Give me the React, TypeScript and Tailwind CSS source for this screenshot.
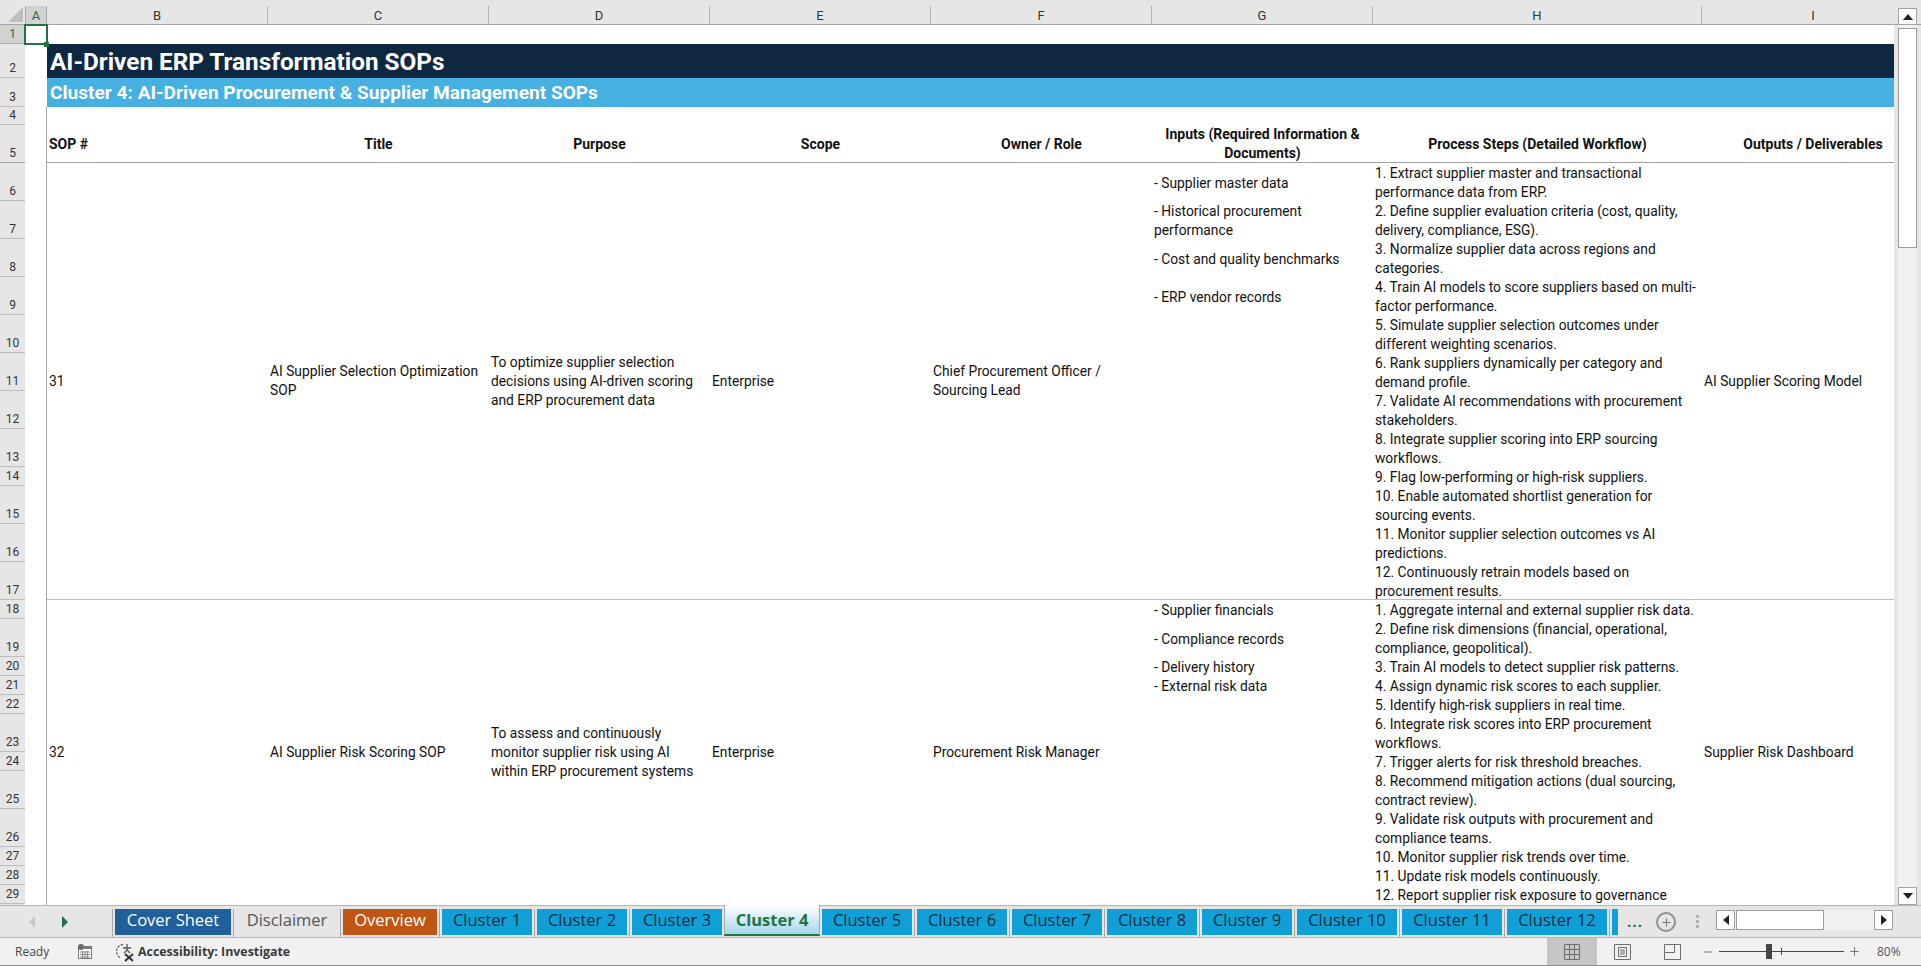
import React from 'react';
import { Plus, Minus } from 'lucide-react';

const COLUMNS = [
  { label: 'B', w: 'w-[221px]' },
  { label: 'C', w: 'w-[221px]' },
  { label: 'D', w: 'w-[221px]' },
  { label: 'E', w: 'w-[221px]' },
  { label: 'F', w: 'w-[221px]' },
  { label: 'G', w: 'w-[221px]' },
  { label: 'H', w: 'w-[329px]' },
];

// row number, height
const ROWS: [number, string][] = [
  [1, 'h-[19px]'], [2, 'h-[34px]'], [3, 'h-[29px]'], [4, 'h-[18px]'], [5, 'h-[38px]'],
  [6, 'h-[38px]'], [7, 'h-[38px]'], [8, 'h-[38px]'], [9, 'h-[38px]'], [10, 'h-[38px]'],
  [11, 'h-[38px]'], [12, 'h-[38px]'], [13, 'h-[38px]'], [14, 'h-[19px]'], [15, 'h-[38px]'],
  [16, 'h-[38px]'], [17, 'h-[38px]'], [18, 'h-[19px]'], [19, 'h-[38px]'], [20, 'h-[19px]'],
  [21, 'h-[19px]'], [22, 'h-[19px]'], [23, 'h-[38px]'], [24, 'h-[19px]'], [25, 'h-[38px]'],
  [26, 'h-[38px]'], [27, 'h-[19px]'], [28, 'h-[19px]'], [29, 'h-[19px]'],
];

const SOPS = [
  {
    no: '31',
    height: 'h-[437px]',
    title: ['AI Supplier Selection Optimization', 'SOP'],
    purpose: ['To optimize supplier selection', 'decisions using AI-driven scoring', 'and ERP procurement data'],
    scope: 'Enterprise',
    owner: ['Chief Procurement Officer /', 'Sourcing Lead'],
    inputs: [
      { h: 'h-[38px]', lines: ['- Supplier master data'] },
      { h: 'h-[38px]', lines: ['- Historical procurement', 'performance'] },
      { h: 'h-[38px]', lines: ['- Cost and quality benchmarks'] },
      { h: 'h-[38px]', lines: ['- ERP vendor records'] },
    ],
    steps: [
      '1. Extract supplier master and transactional',
      'performance data from ERP.',
      '2. Define supplier evaluation criteria (cost, quality,',
      'delivery, compliance, ESG).',
      '3. Normalize supplier data across regions and',
      'categories.',
      '4. Train AI models to score suppliers based on multi-',
      'factor performance.',
      '5. Simulate supplier selection outcomes under',
      'different weighting scenarios.',
      '6. Rank suppliers dynamically per category and',
      'demand profile.',
      '7. Validate AI recommendations with procurement',
      'stakeholders.',
      '8. Integrate supplier scoring into ERP sourcing',
      'workflows.',
      '9. Flag low-performing or high-risk suppliers.',
      '10. Enable automated shortlist generation for',
      'sourcing events.',
      '11. Monitor supplier selection outcomes vs AI',
      'predictions.',
      '12. Continuously retrain models based on',
      'procurement results.',
    ],
    output: 'AI Supplier Scoring Model',
  },
  {
    no: '32',
    height: 'h-[305px]',
    title: ['AI Supplier Risk Scoring SOP'],
    purpose: ['To assess and continuously', 'monitor supplier risk using AI', 'within ERP procurement systems'],
    scope: 'Enterprise',
    owner: ['Procurement Risk Manager'],
    inputs: [
      { h: 'h-[19px]', lines: ['- Supplier financials'] },
      { h: 'h-[38px]', lines: ['- Compliance records'] },
      { h: 'h-[19px]', lines: ['- Delivery history'] },
      { h: 'h-[19px]', lines: ['- External risk data'] },
    ],
    steps: [
      '1. Aggregate internal and external supplier risk data.',
      '2. Define risk dimensions (financial, operational,',
      'compliance, geopolitical).',
      '3. Train AI models to detect supplier risk patterns.',
      '4. Assign dynamic risk scores to each supplier.',
      '5. Identify high-risk suppliers in real time.',
      '6. Integrate risk scores into ERP procurement',
      'workflows.',
      '7. Trigger alerts for risk threshold breaches.',
      '8. Recommend mitigation actions (dual sourcing,',
      'contract review).',
      '9. Validate risk outputs with procurement and',
      'compliance teams.',
      '10. Monitor supplier risk trends over time.',
      '11. Update risk models continuously.',
      '12. Report supplier risk exposure to governance',
    ],
    output: 'Supplier Risk Dashboard',
  },
];

const TABS = [
  { name: 'Cover Sheet', w: 'w-[116px]', cls: 'bg-[#215f9a] text-white' },
  { name: 'Disclaimer', w: 'w-[102px]', cls: 'text-[#555555]' },
  { name: 'Overview', w: 'w-[94px]', cls: 'bg-[#c05515] text-white' },
  { name: 'Cluster 1', w: 'w-[90px]', cls: 'bg-[#119fd7] text-[#10303f]' },
  { name: 'Cluster 2', w: 'w-[90px]', cls: 'bg-[#119fd7] text-[#10303f]' },
  { name: 'Cluster 3', w: 'w-[90px]', cls: 'bg-[#119fd7] text-[#10303f]' },
];

const TABS_AFTER = [
  { name: 'Cluster 5', w: 'w-[90px]' },
  { name: 'Cluster 6', w: 'w-[90px]' },
  { name: 'Cluster 7', w: 'w-[90px]' },
  { name: 'Cluster 8', w: 'w-[90px]' },
  { name: 'Cluster 9', w: 'w-[90px]' },
  { name: 'Cluster 10', w: 'w-[100px]' },
  { name: 'Cluster 11', w: 'w-[100px]' },
  { name: 'Cluster 12', w: 'w-[100px]' },
];

function TabSep() {
  return <div className="mx-[2px] h-[28px] w-px shrink-0 bg-[#a8a8a8]" />;
}

function Lines({ lines }: { lines: string[] }) {
  return (
    <div>
      {lines.map((l) => (
        <div key={l} className="whitespace-nowrap">{l}</div>
      ))}
    </div>
  );
}

function SopRow({ sop, last }: { sop: (typeof SOPS)[number]; last: boolean }) {
  const cell = 'flex items-center px-[2px]';
  return (
    <div className={`flex shrink-0 text-[#111111] ${sop.height} ${last ? '' : 'border-b border-[#bdbdbd]'}`}>
      <div className={`${cell} ${COLUMNS[0].w}`}>{sop.no}</div>
      <div className={`${cell} ${COLUMNS[1].w}`}><Lines lines={sop.title} /></div>
      <div className={`${cell} ${COLUMNS[2].w}`}><Lines lines={sop.purpose} /></div>
      <div className={`${cell} ${COLUMNS[3].w}`}>{sop.scope}</div>
      <div className={`${cell} ${COLUMNS[4].w}`}><Lines lines={sop.owner} /></div>
      <div className={`px-[2px] pt-px ${COLUMNS[5].w}`}>
        {sop.inputs.map((it) => (
          <div key={it.lines[0]} className={`flex items-center ${it.h}`}>
            <Lines lines={it.lines} />
          </div>
        ))}
      </div>
      <div className={`px-[2px] pt-px ${COLUMNS[6].w}`}><Lines lines={sop.steps} /></div>
      <div className={`${cell} w-[192px]`}>{sop.output}</div>
    </div>
  );
}

function Triangle({ dir }: { dir: 'up' | 'down' | 'left' | 'right' }) {
  const pts = {
    up: '0,8 5,2 10,8',
    down: '0,2 10,2 5,8',
    left: '8,0 8,10 2,5',
    right: '2,0 2,10 8,5',
  }[dir];
  return (
    <svg width="10" height="10" viewBox="0 0 10 10">
      <polygon points={pts} fill="#222222" />
    </svg>
  );
}

export default function App() {
  return (
    <div className="flex h-[966px] w-[1921px] flex-col overflow-hidden bg-[#e6e6e6] font-[Roboto,sans-serif] text-[13.8px] leading-[19px]">
      {/* column headers */}
      <div className="flex h-[25px] shrink-0 items-end border-b border-[#a3a3a3] pt-[6px] text-[13px]">
        <div className="flex h-[18px] w-[25px] items-end justify-end pb-[2px] pr-[2px]">
          <svg width="15" height="15" viewBox="0 0 15 15"><polygon points="15,0 15,15 0,15" fill="#bdbdbd" /></svg>
        </div>
        <div className="flex h-[18px] w-[22px] items-center justify-center border-x border-[#a9a9a9] bg-[#d2d2d2] text-[#217346]">A</div>
        {COLUMNS.map((c) => (
          <div key={c.label} className={`flex h-[18px] items-center justify-center border-r border-[#b4b4b4] text-[#333333] ${c.w}`}>
            {c.label}
          </div>
        ))}
        {/* column I runs on past the window edge, so its label sits right of the visible middle */}
        <div className="flex h-[18px] w-[192px] items-center justify-center pl-[30px] text-[#333333]">I</div>
      </div>

      {/* sheet area */}
      <div className="flex h-[880px] shrink-0">
        <div className="w-[25px] shrink-0 overflow-hidden">
          {ROWS.map(([n, h]) => (
            <div
              key={n}
              className={`flex items-end justify-center border-b text-[12px] leading-[17px] ${h} ${
                n === 1 ? 'border-[#a9a9a9] bg-[#d2d2d2] text-[#217346]' : n === 5 ? 'border-[#a3a3a3] text-[#333333]' : 'border-[#bcbcbc] text-[#333333]'
              }`}
            >
              {n}
            </div>
          ))}
        </div>

        <div className="w-[1869px] shrink-0 bg-white">
          <div className="relative h-[19px]">
            <div className="absolute -left-[1px] -top-[1px] h-[21px] w-[24px] border-2 border-[#217346]" />
            <div className="absolute left-[19px] top-[17px] h-[5px] w-[5px] bg-[#217346]" />
          </div>
          <div className="ml-[22px] flex h-[34px] items-center bg-[#0e2841] px-[3px] pt-px text-[24.3px] font-bold text-white">
            AI-Driven ERP Transformation SOPs
          </div>
          <div className="ml-[22px] flex h-[29px] items-center bg-[#45b0e1] px-[3px] text-[19.1px] font-bold text-white">
            Cluster 4: AI-Driven Procurement &amp; Supplier Management SOPs
          </div>
          <div className="ml-[21px] h-[798px] overflow-hidden border-l border-[#a3a3a3]">
            <div className="h-[18px]" />
            <div className="flex h-[38px] items-center border-b border-[#a3a3a3] pt-px text-center text-[14px] font-bold text-[#111111]">
              <div className={`px-[2px] text-left ${COLUMNS[0].w}`}>SOP #</div>
              <div className={COLUMNS[1].w}>Title</div>
              <div className={COLUMNS[2].w}>Purpose</div>
              <div className={COLUMNS[3].w}>Scope</div>
              <div className={COLUMNS[4].w}>Owner / Role</div>
              <div className={COLUMNS[5].w}>Inputs (Required Information &amp; Documents)</div>
              <div className={COLUMNS[6].w}>Process Steps (Detailed Workflow)</div>
              <div className="w-[192px] pl-[30px]">Outputs / Deliverables</div>
            </div>
            {SOPS.map((s, i) => (
              <SopRow key={s.no} sop={s} last={i === SOPS.length - 1} />
            ))}
          </div>
        </div>

        {/* vertical scrollbar */}
        <div className="-mt-[17px] flex h-[897px] w-[27px] shrink-0 flex-col items-center">
          <div className="flex h-[17px] w-[19px] shrink-0 items-center justify-center border border-[#a3a3a3] bg-white"><Triangle dir="up" /></div>
          <div className="flex w-[19px] flex-1 flex-col bg-[#f0f0f0] pt-[3px]">
            <div className="h-[220px] border border-[#9c9c9c] bg-white" />
          </div>
          <div className="flex h-[18px] w-[19px] shrink-0 items-center justify-center border border-[#a3a3a3] bg-white"><Triangle dir="down" /></div>
        </div>
      </div>

      {/* sheet tabs */}
      <div className="flex h-[33px] shrink-0 items-start border-t border-b border-[#b5b5b5] pt-[3px] font-['Open_Sans',sans-serif] text-[16.5px] leading-[22px]">
        <div className="flex h-[26px] w-[110px] shrink-0 items-center">
          <svg className="ml-[29px]" width="7" height="12" viewBox="0 0 7 12"><polygon points="6,0 6,12 0,6" fill="#c8c8c8" /></svg>
          <svg className="ml-[25px]" width="7" height="12" viewBox="0 0 7 12"><polygon points="1,0 1,12 7,6" fill="#217346" /></svg>
        </div>
        <TabSep />
        {TABS.map((t, i) => (
          <React.Fragment key={t.name}>
            <div className={`h-[26px] shrink-0 text-center ${t.w} ${t.cls}`}>{t.name}</div>
            {i < TABS.length - 1 && <TabSep />}
          </React.Fragment>
        ))}
        <div className="-mt-[4px] ml-[2px] mr-[2px] h-[31px] w-[96px] shrink-0 border-x border-b-2 border-x-[#a8a8a8] border-b-[#217346] bg-gradient-to-b from-white to-[#a5d6ec] pt-[4px] text-center font-bold text-[#217346]">
          Cluster 4
        </div>
        {TABS_AFTER.map((t) => (
          <React.Fragment key={t.name}>
            <div className={`h-[26px] shrink-0 bg-[#119fd7] text-center text-[#10303f] ${t.w}`}>{t.name}</div>
            <TabSep />
          </React.Fragment>
        ))}
        <div className="h-[26px] w-[6px] shrink-0 bg-[#119fd7]" />
        <div className="ml-[9px] w-[16px] shrink-0 text-center text-[15px] font-bold leading-[24px] tracking-[1px] text-[#217346]">...</div>
        <div className="ml-[13px] mt-[3px] flex h-[20px] w-[20px] shrink-0 items-center justify-center rounded-full border-2 border-[#8f8f8f] text-[#7a7a7a]">
          <Plus size={13} strokeWidth={2} />
        </div>
        <div className="ml-[20px] mt-[6px] flex shrink-0 flex-col gap-[2px]">
          <div className="h-[3px] w-[3px] bg-[#b0b0b0]" />
          <div className="h-[3px] w-[3px] bg-[#b0b0b0]" />
          <div className="h-[3px] w-[3px] bg-[#b0b0b0]" />
        </div>
        <div className="ml-[17px] mt-[1px] flex h-[20px] w-[177px] shrink-0 bg-[#f0f0f0]">
          <div className="flex w-[19px] items-center justify-center border border-[#9c9c9c] bg-white"><Triangle dir="left" /></div>
          <div className="ml-px w-[88px] border border-[#9c9c9c] bg-white" />
          <div className="flex-1" />
          <div className="flex w-[19px] items-center justify-center border border-[#9c9c9c] bg-white"><Triangle dir="right" /></div>
        </div>
      </div>

      {/* status bar */}
      <div className="flex h-[27px] shrink-0 items-center bg-[#f1f1f1] font-['Open_Sans',sans-serif] text-[12px] text-[#444444]">
        <span className="ml-[15px] w-[63px]">Ready</span>
        <svg width="14" height="15" viewBox="0 0 14 15">
          <rect x="0.5" y="2.5" width="13" height="12" fill="#ffffff" stroke="#7a7a7a" />
          <rect x="0" y="0" width="6" height="6" rx="3" fill="#6a6a6a" />
          <rect x="6" y="2" width="8" height="3" fill="#7a7a7a" />
          <path d="M2 8h10M2 10.5h10M2 13h10M4.5 7v7M7 7v7M9.5 7v7" stroke="#8a8a8a" strokeWidth="1" />
        </svg>
        <svg className="ml-[23px]" width="20" height="20" viewBox="0 0 20 20" fill="none">
          <path d="M8 2.5A7 7 0 0 0 6 16" stroke="#666666" strokeWidth="1.3" strokeDasharray="2.5 1.2" />
          <path d="M12 2v6M8 6h8M12 8l-3 3M12 8l3 3" stroke="#555555" strokeWidth="1.3" />
          <path d="M10 12l8 7M18 12l-8 7" stroke="#333333" strokeWidth="2" />
        </svg>
        <span className="ml-[3px] text-[12.4px] font-bold text-[#3a3a3a]">Accessibility: Investigate</span>
        <div className="ml-auto flex h-full items-center">
          <div className="flex h-full w-[50px] items-center justify-center bg-[#c6c6c6]">
            <svg width="16" height="16" viewBox="0 0 16 16" fill="none" stroke="#6e6e6e">
              <path d="M.5.5h15v15H.5zM.5 5.5h15M.5 10.5h15M5.5.5v15M10.5.5v15" />
            </svg>
          </div>
          <div className="flex h-full w-[50px] items-center justify-center">
            <svg width="17" height="16" viewBox="0 0 17 16" fill="none" stroke="#6e6e6e">
              <path d="M.5.5h16v15H.5zM4.5 3.5h8v9h-8zM6 6h5M6 8h5M6 10h5" />
            </svg>
          </div>
          <div className="flex h-full w-[50px] items-center justify-center">
            <svg width="17" height="16" viewBox="0 0 17 16" fill="none" stroke="#6e6e6e">
              <path d="M.5.5h16v15H.5zM.5 8.5h10M10.5.5v8" />
            </svg>
          </div>
          <Minus className="ml-[5px] text-[#555555]" size={12} strokeWidth={1.5} />
          <div className="relative ml-[5px] h-px w-[125px] bg-[#444444]">
            <div className="absolute -top-[7px] left-[47px] h-[15px] w-[6px] bg-[#444444]" />
            <div className="absolute -top-[3px] left-[62px] h-[7px] w-px bg-[#444444]" />
          </div>
          <Plus className="ml-[4px] text-[#555555]" size={13} strokeWidth={1.5} />
          <span className="ml-[16px] mr-[20px] w-[24px] text-[#555555]">80%</span>
        </div>
      </div>
      <div className="h-px bg-[#8f8f8f]" />
    </div>
  );
}
